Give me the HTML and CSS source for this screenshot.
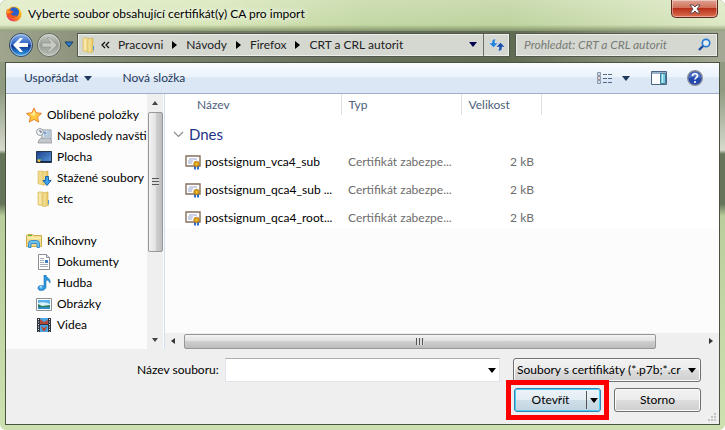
FILE: index.html
```html
<!DOCTYPE html>
<html lang="cs">
<head>
    <meta charset="UTF-8">
    <meta name="viewport" content="width=device-width, initial-scale=1.0">
    <title>Vyberte soubor</title>
    <link rel="stylesheet" href="styles.css">
</head>
<body>
    <!-- shared shapes -->
    <svg class="defs" width="0" height="0">
        <defs>
            <linearGradient id="gold" x1="0" x2="1" y1="0" y2="0">
                <stop offset="0" stop-color="#f8eaa8"/>
                <stop offset="1" stop-color="#e2be55"/>
            </linearGradient>
            <linearGradient id="fox" x1="1" x2="0" y1="0" y2="1">
                <stop offset="0" stop-color="#ffe226"/>
                <stop offset="0.5" stop-color="#ff8a16"/>
                <stop offset="1" stop-color="#e31587"/>
            </linearGradient>
            <linearGradient id="blue" x1="0" x2="0" y1="0" y2="1">
                <stop offset="0" stop-color="#8db5ea"/>
                <stop offset="0.48" stop-color="#2a5fbd"/>
                <stop offset="0.52" stop-color="#0d2f8c"/>
                <stop offset="1" stop-color="#35a9f0"/>
            </linearGradient>
            <linearGradient id="grey" x1="0" x2="0" y1="0" y2="1">
                <stop offset="0" stop-color="#c9cec8"/>
                <stop offset="0.5" stop-color="#989e94"/>
                <stop offset="1" stop-color="#bdc2ba"/>
            </linearGradient>
            <linearGradient id="sky" x1="0" x2="1" y1="0" y2="1">
                <stop offset="0" stop-color="#1b3f8c"/>
                <stop offset="1" stop-color="#5b9bdc"/>
            </linearGradient>
            <symbol id="folder" viewBox="0 0 16 16">
                <path d="M2 1h5l1 1v13l-5-1H2z" fill="#f0d98a" stroke="#d9ba57" stroke-width=".6"/>
                <path d="M7 2l5-1v12l1 1-5 2H7z" fill="url(#gold)" stroke="#d2ac43" stroke-width=".6"/>
                <path d="M4 2v11" stroke="#fff6cf"/>
                <path d="M12 9h1v4h-1z" fill="#4c9be0"/>
            </symbol>
            <symbol id="cert" viewBox="0 0 16 16">
                <path d="M1 2h14v10H1z" fill="#fff" stroke="#85705c" stroke-width="1.4"/>
                <path d="M4 5h8M3 7h5M3 9h4" stroke="#9aa3cf"/>
                <path d="M9 11h2v5l-1-1-1 1zM12 11h2v5l-1-1-1 1z" fill="#2d6fd0"/>
                <circle cx="11.500" cy="10" r="2.800" fill="#d99a12" stroke="#a9700a" stroke-width=".6"/>
                <circle cx="11.500" cy="10" r="1" fill="#f4cf5a"/>
            </symbol>
            <symbol id="down" viewBox="0 0 8 5">
                <path d="M0 0h8L4 5z" fill="currentColor"/>
            </symbol>
            <symbol id="right" viewBox="0 0 5 8">
                <path d="M0 0v8l5-4z" fill="currentColor"/>
            </symbol>
        </defs>
    </svg>

    <main class="window">
        <header class="titlebar">
            <svg class="logo" viewBox="0 0 16 16">
                <circle cx="8" cy="8" r="7.600" fill="url(#fox)"/>
                <path d="M5 2c3-2 7 0 8 3 0 3-1 6-4 6-3 1-6-1-6-4z" fill="#2760c8"/>
                <path d="M1 3l2 2c2-1 3 0 5 1-1 1-3 1-3 2 1 2 4 2 6 1-1 3-5 4-8 2C0 9 0 6 1 3z" fill="#f2541b"/>
                <path d="M1 3l2 2 3 1-3 1-2 1z" fill="#ff9a1f"/>
            </svg>
            <h1>Vyberte soubor obsahující certifikát(y) CA pro import</h1>
            <button class="close" aria-label="Zavřít">
                <svg width="12" height="10" viewBox="0 0 12 10"><path d="M1 1h3l2 2 2-2h3L8 5l3 4H8L6 7 4 9H1l3-4z" fill="#fff" stroke="#5a4a4e"/></svg>
            </button>
        </header>

        <div class="navbar">
            <div class="history">
                <button aria-label="Zpět">
                    <svg width="26" height="26" viewBox="0 0 26 26">
                        <circle cx="13" cy="13" r="11.500" fill="url(#blue)" stroke="#3a4a5c"/>
                        <circle cx="13" cy="13" r="10.500" fill="none" stroke="#c9dcf4" stroke-opacity=".7"/>
                        <path d="M5 13l7-7h3l-4 5h9v4h-9l4 5h-3z" fill="#fff"/>
                    </svg>
                </button>
                <button aria-label="Vpřed">
                    <svg width="26" height="26" viewBox="0 0 26 26">
                        <circle cx="13" cy="13" r="11.500" fill="url(#grey)" stroke="#5f675b"/>
                        <circle cx="13" cy="13" r="10.500" fill="none" stroke="#dde0da" stroke-opacity=".7"/>
                        <path d="M21 13l-7-7h-3l4 5H6v4h9l-4 5h3z" fill="#c6cac3" stroke="#8e958a" stroke-width=".6"/>
                    </svg>
                </button>
                <button class="recent" aria-label="Poslední stránky">
                    <svg width="10" height="7" viewBox="0 0 10 7"><path d="M1 1h8L5 6z" fill="#2f7dcd" stroke="#1b3c68"/></svg>
                </button>
            </div>
            <div class="address">
                <svg class="icon"><use href="#folder"/></svg>
                <svg class="more" width="9" height="8" viewBox="0 0 9 8"><path d="M4 1L1 4l3 3M8 1L5 4l3 3" fill="none" stroke="#111" stroke-width="1.300"/></svg>
                <a href="#">Pracovni</a>
                <svg class="sep"><use href="#right"/></svg>
                <a href="#">Návody</a>
                <svg class="sep"><use href="#right"/></svg>
                <a href="#">Firefox</a>
                <svg class="sep"><use href="#right"/></svg>
                <a href="#">CRT a CRL autorit</a>
                <button class="drop" aria-label="Předchozí umístění"><svg class="arrow"><use href="#down"/></svg></button>
                <button class="refresh" aria-label="Obnovit">
                    <svg width="16" height="14" viewBox="0 0 16 14">
                        <path d="M7 1C3 1 3 3 3 5H0l4.500 4.500L9 5H6c0-2 0-3 1-4z" fill="#2684d8" stroke="#eef6fc" stroke-width=".4"/>
                        <path d="M9 13c4 0 4-2 4-4h3l-4.500-4.500L7 9h3c0 2 0 3-1 4z" fill="#1c52a8" stroke="#eef6fc" stroke-width=".4"/>
                    </svg>
                </button>
            </div>
            <div class="search">
                <input type="search" placeholder="Prohledat: CRT a CRL autorit" aria-label="Prohledat">
                <svg width="13" height="13" viewBox="0 0 13 13">
                    <path d="M1 12l5-5" stroke="#1d4a9c" stroke-width="2.400"/>
                    <circle cx="8" cy="5" r="3.700" fill="#e3eef5" stroke="#2a7bd0" stroke-width="1.700"/>
                </svg>
            </div>
        </div>

        <section class="dialog">
            <div class="toolbar">
                <button class="organize">Uspořádat <svg class="arrow"><use href="#down"/></svg></button>
                <button>Nová složka</button>
                <div class="tools">
                    <button aria-label="Změnit zobrazení">
                        <svg width="16" height="13" viewBox="0 0 16 13">
                            <path d="M1.500.5h3v3h-3zM1.500 4.500h3v3h-3zM1.500 8.500h3v3h-3z" fill="#fff" stroke="#8c96a8"/>
                            <path d="M2.500 1.500h1v1h-1zM2.500 9.500h1v1h-1z" fill="#3d74c0"/>
                            <path d="M2.500 5.500h1v1h-1z" fill="#c33"/>
                            <path d="M7 2.500h4m1 0h4M7 6.500h4m1 0h4M7 10.500h4m1 0h4" stroke="#51698c"/>
                        </svg>
                    </button>
                    <button class="views" aria-label="Další možnosti"><svg class="arrow"><use href="#down"/></svg></button>
                    <button class="preview" aria-label="Podokno náhledu">
                        <svg width="16" height="14" viewBox="0 0 16 14">
                            <path d="M.5.5h15v13H.5z" fill="#fff" stroke="#4d6585"/>
                            <path d="M1 1h14v2H1z" fill="#9cb2cc"/>
                            <path d="M9.500 2.500h5v10h-5z" fill="#79cbe0" stroke="#3f7c9c"/>
                            <path d="M11.500 3v9" stroke="#c6f0f6"/>
                        </svg>
                    </button>
                    <button aria-label="Nápověda">
                        <svg width="16" height="16" viewBox="0 0 16 16">
                            <circle cx="8" cy="8" r="7.300" fill="#2449ac" stroke="#8a8f9c" stroke-width="1.400"/>
                            <path d="M2 8a6 6 0 0 1 12 0q-6-2-12 0z" fill="#6f92dc" opacity=".6"/>
                            <path d="M5.500 6c0-3 5-3 5 0 0 1.500-2.500 1.700-2.500 3.500" fill="none" stroke="#fff" stroke-width="1.700"/>
                            <circle cx="8" cy="12" r="1.100" fill="#fff"/>
                        </svg>
                    </button>
                </div>
            </div>

            <div class="content">
                <nav class="sidebar">
                    <ul>
                        <li class="root"><a href="#">
                            <svg class="icon" viewBox="0 0 16 16"><path d="M8 1l2.200 4.800 5.300.6-4 3.500 1.200 5.200L8 12.400l-4.700 2.700 1.200-5.200-4-3.500 5.300-.6z" fill="#ffc83d" stroke="#e8822a"/><path d="M8 3l1.500 4L8 9 4 7l2.500-.5z" fill="#ffec94"/></svg>
                            Oblíbené položky</a></li>
                        <li><a href="#">
                            <svg class="icon" viewBox="0 0 16 16"><path d="M6 2h9v9H6z" fill="#e8eef4" stroke="#8b949e"/><path d="M8 4h2v2H8zM11 4h3M11 6h3M8 8h6" fill="#5c9bd4" stroke="#7fa6c8"/><path d="M3 12l2-2h9l2 3v2H2z" fill="#c3c8cd" stroke="#868d94" stroke-width=".7"/><circle cx="4" cy="4" r="3.400" fill="#f4f7fa" stroke="#8c98a4"/><path d="M4 2v2h2" fill="none" stroke="#556"/></svg>
                            Naposledy navšti</a></li>
                        <li><a href="#">
                            <svg class="icon" viewBox="0 0 16 16"><path d="M.5 2.500h15v11H.5z" fill="url(#sky)" stroke="#27364f"/><path d="M1 12h14v1H1z" fill="#18233c"/><circle cx="3" cy="11.500" r="1.500" fill="#f0c53a"/><path d="M3 10h2v1H3z" fill="#46b35a"/></svg>
                            Plocha</a></li>
                        <li><a href="#">
                            <svg class="icon" viewBox="0 0 16 16"><path d="M2 1h5l1 1v13l-5-1H2z" fill="#f0d98a" stroke="#d9ba57" stroke-width=".6"/><path d="M7 2l5-1v12l-4 2H7z" fill="url(#gold)" stroke="#d2ac43" stroke-width=".6"/><path d="M9.500 6.500h3v4h2.500L11 15.500 7 10.500h2.500z" fill="#3ba2ea" stroke="#1663ae"/></svg>
                            Stažené soubory</a></li>
                        <li><a href="#"><svg class="icon"><use href="#folder"/></svg> etc</a></li>
                    </ul>
                    <ul>
                        <li class="root"><a href="#">
                            <svg class="icon" viewBox="0 0 16 16"><path d="M.5 2.500l1-1h5l1 1h8v11H.5z" fill="#f2dc8b" stroke="#cfac49"/><path d="M1 5h14" stroke="#fff6c8"/><path d="M2 2.500h4" stroke="#5cbf3c"/><path d="M2.500 14.500v-4q0-3 3-3h5q3 0 3 3v4H11v-4H5v4z" fill="#6fc0ea" stroke="#3a8cc4"/></svg>
                            Knihovny</a></li>
                        <li><a href="#">
                            <svg class="icon" viewBox="0 0 16 16"><path d="M2.500.5h8l3 3v12h-11z" fill="#fff" stroke="#8a8f96"/><path d="M10.500.5v3h3" fill="#dde" stroke="#8a8f96"/><path d="M4 4.500h4M4 6.500h4M4 8.500h4M4 10.500h8M4 12.500h8" stroke="#a6afbb"/><path d="M9 6h3v3H9z" fill="#3a7fc4"/></svg>
                            Dokumenty</a></li>
                        <li><a href="#">
                            <svg class="icon" viewBox="0 0 16 16"><path d="M8 0h2c0 3 5 3 4 8-1-2-2-3-4-3v7c0 4-8 5-8 1 0-3 4-3 6-2z" fill="#2c98de" stroke="#1b70b4" stroke-width=".6"/><circle cx="5" cy="12" r="1.500" fill="#8fd0f6"/></svg>
                            Hudba</a></li>
                        <li><a href="#">
                            <svg class="icon" viewBox="0 0 16 16"><path d="M.5 2.500h15v12H.5z" fill="#fff" stroke="#8a9096"/><path d="M2 4h12v9H2z" fill="#59b0e8"/><path d="M2 7q6-2 12 1v2H2z" fill="#d8f0fa"/><path d="M2 8l4 2 8-1v2H2z" fill="#2d7a5c"/><path d="M2 11h12v2H2z" fill="#2f8fc4"/></svg>
                            Obrázky</a></li>
                        <li><a href="#">
                            <svg class="icon" viewBox="0 0 16 16"><path d="M1 1h14v14H1z" fill="#30363e"/><path d="M4 1h8v6H4zM4 8h8v7H4z" fill="#4ba3e2"/><path d="M4 2l4 3 4-2v4H4zM5 9l3 2 3-2-2 5H7z" fill="#b4493a"/><path d="M2.500 2v13M13.500 2v13" stroke="#e8ecf0" stroke-dasharray="1 1.500"/></svg>
                            Videa</a></li>
                    </ul>
                </nav>
                <div class="vscroll">
                    <svg class="up" width="6" height="4" viewBox="0 0 6 4"><path d="M0 4h6L3 0z" fill="#444"/></svg>
                    <div class="vthumb"><i></i></div>
                    <svg class="dn" width="6" height="4" viewBox="0 0 6 4"><path d="M0 0h6L3 4z" fill="#444"/></svg>
                </div>

                <div class="files">
                    <table>
                        <colgroup><col class="name"><col class="type"><col class="size"></colgroup>
                        <thead>
                            <tr><th>Název</th><th>Typ</th><th>Velikost</th></tr>
                        </thead>
                        <tbody>
                            <tr class="group">
                                <td colspan="3"><svg width="11" height="7" viewBox="0 0 11 7"><path d="M1 1l4.500 4.500L10 1" fill="none" stroke="#8c8c8c" stroke-width="1.200"/></svg>Dnes</td>
                            </tr>
                            <tr><td><svg class="icon"><use href="#cert"/></svg>postsignum_vca4_sub</td><td>Certifikát zabezpe...</td><td>2 kB</td></tr>
                            <tr><td><svg class="icon"><use href="#cert"/></svg>postsignum_qca4_sub ...</td><td>Certifikát zabezpe...</td><td>2 kB</td></tr>
                            <tr><td><svg class="icon"><use href="#cert"/></svg>postsignum_qca4_root...</td><td>Certifikát zabezpe...</td><td>2 kB</td></tr>
                        </tbody>
                    </table>
                    <div class="hscroll">
                        <svg width="4" height="6" viewBox="0 0 4 6"><path d="M4 0v6L0 3z" fill="#333"/></svg>
                        <div class="hthumb"><i></i></div>
                        <svg width="4" height="6" viewBox="0 0 4 6"><path d="M0 0v6l4-3z" fill="#333"/></svg>
                    </div>
                </div>
            </div>

            <form class="bottom">
                <div class="line">
                    <label for="filename">Název souboru:</label>
                    <div class="combo">
                        <input id="filename" type="text">
                        <svg class="arrow"><use href="#down"/></svg>
                    </div>
                    <div class="filter">
                        <select aria-label="Typ souboru">
                            <option>Soubory s certifikáty (*.p7b;*.cr</option>
                        </select>
                        <svg class="arrow"><use href="#down"/></svg>
                    </div>
                </div>
                <div class="line actions">
                    <div class="open">
                        <button type="button">Otevřít</button>
                        <button type="button" class="split" aria-label="Možnosti otevření"><svg class="arrow"><use href="#down"/></svg></button>
                    </div>
                    <button type="button" class="cancel">Storno</button>
                </div>
                <svg class="grip" width="9" height="9" viewBox="0 0 9 9"><path d="M6 0h2v2H6zM3 3h2v2H3zM6 3h2v2H6zM0 6h2v2H0zM3 6h2v2H3zM6 6h2v2H6z" fill="#c3c3c3"/></svg>
            </form>
        </section>
    </main>
</body>
</html>
```
FILE: styles.css
```css
* {
    box-sizing: border-box;
}
body {
    margin: 0;
    font-family: Lato, "Open Sans", "Noto Sans", sans-serif;
    font-size: 12px;
    line-height: 16px;
    color: #000;
}
button, input, select {
    font: inherit;
    color: inherit;
    margin: 0;
    padding: 0;
    border: none;
    background: none;
}
a {
    color: inherit;
    text-decoration: none;
}
ul {
    list-style: none;
    margin: 0;
    padding: 0;
}
.defs {
    position: absolute;
}
.icon {
    width: 16px;
    height: 16px;
    flex: none;
}
.arrow {
    width: 8px;
    height: 5px;
    flex: none;
}
.window {
    min-height: 100vh;
    display: flex;
    flex-direction: column;
    padding: 0 5px 5px;
    border-radius: 6px;
    background: linear-gradient(#8f9a80 0, #8f9a80 90px, #d5dacd 150px, #66755a 154px, #66755a 204px, #b8cc9c 216px, #cde0b0 100%);
}

/* title */
.titlebar {
    height: 31px;
    margin: 0 -5px;
    padding: 0 7px 4px 6px;
    display: flex;
    align-items: center;
    gap: 6px;
    border-radius: 6px 6px 0 0;
    background: linear-gradient(rgba(255, 255, 255, 0.2), rgba(255, 255, 255, 0) 80%, rgba(90, 105, 70, 0.6)), linear-gradient(to right, #e0ecc6, #d6e6b6 30%, #c3d7a3 50%, #bed39e 70%, #dce9c4);
}
.logo {
    width: 16px;
    height: 16px;
}
.titlebar h1 {
    margin: 0;
    flex: 1;
    font-size: 12px;
    font-weight: normal;
    white-space: nowrap;
    text-shadow: 0 0 6px #fff, 0 0 10px #fff;
}
.close {
    align-self: flex-start;
    width: 47px;
    height: 18px;
    display: flex;
    align-items: center;
    justify-content: center;
    border: 1px solid #5e2a20;
    border-top: none;
    border-radius: 0 0 5px 5px;
    background: linear-gradient(#e0a393, #d0705a 45%, #b8301a 50%, #dc7050);
    box-shadow: inset 0 0 0 1px rgba(255, 255, 255, 0.4);
}

/* back, address, search */
.navbar {
    height: 31px;
    margin: 0 -5px;
    padding: 0 7px 4px 8px;
    display: flex;
    align-items: center;
    background: linear-gradient(to right, #a0a58d, #7c846e 20%, #66705a 50%, #5f6b50 70%, #a3a994);
}
.history {
    width: 69px;
    display: flex;
    align-items: center;
    gap: 2px;
}
.history button {
    display: flex;
}
.address, .search {
    height: 24px;
    display: flex;
    align-items: center;
    border: 1px solid #52584c;
    background: #d5d7d1;
    box-shadow: inset 0 0 0 1px #eceeea;
    color: #222;
}
.address {
    flex: 1;
    padding-left: 3px;
    white-space: nowrap;
}
.address .more {
    margin: 0 8px 0 4px;
}
.address .sep {
    width: 5px;
    height: 8px;
    margin: 0 9px;
    color: #000;
}
.drop {
    margin-left: auto;
    width: 20px;
    color: #000050;
}
.drop, .refresh {
    height: 22px;
    display: flex;
    align-items: center;
    justify-content: center;
}
.refresh {
    width: 26px;
    border-left: 1px solid #6d7268;
}
.search {
    width: 203px;
    margin-left: 5px;
    padding: 0 6px 0 8px;
}
.search input {
    flex: 1;
    min-width: 0;
    outline: none;
}
.search input::placeholder {
    color: #777b75;
    font-style: italic;
    opacity: 1;
}

/* client area */
.dialog {
    flex: 1;
    display: flex;
    flex-direction: column;
    border: 1px solid #4a5340;
    background: #efefef;
}
.toolbar {
    height: 31px;
    display: flex;
    align-items: center;
    padding: 0 16px 0 18px;
    gap: 30px;
    color: #1e395b;
    background: linear-gradient(#fafcff, #eaf2fb 45%, #dce7f5 50%, #dce7f5);
    border-bottom: 1px solid #a0afc8;
}
.organize {
    display: flex;
    align-items: center;
    gap: 6px;
}
.tools {
    margin-left: auto;
    display: flex;
    align-items: center;
}
.tools button {
    display: flex;
}
.tools .views {
    margin-left: 10px;
}
.tools .preview {
    margin: 0 20px 0 21px;
}
.content {
    flex: 1;
    display: flex;
    background: #fcfcfc;
}
.sidebar {
    width: 141px;
    padding: 10px 0 4px;
    overflow: hidden;
    white-space: nowrap;
}
.sidebar ul + ul {
    margin-top: 21px;
}
.sidebar a {
    height: 21px;
    display: flex;
    align-items: center;
    gap: 5px;
    padding-left: 30px;
}
.sidebar .root a {
    padding-left: 20px;
}
.vscroll {
    width: 16px;
    display: flex;
    flex-direction: column;
    align-items: center;
    background: #efefef;
}
.up {
    margin: 7px 0;
}
.dn {
    margin: auto 0 7px;
}
.vthumb {
    width: 15px;
    flex: 0 0 55%;
    display: flex;
    align-items: center;
    justify-content: center;
    border: 1px solid #979797;
    border-radius: 2px;
    background: linear-gradient(to right, #f3f3f3, #e2e2e2 50%, #cfcfd1 55%, #bdbdc0);
}
.vthumb i {
    width: 7px;
    height: 8px;
    background: repeating-linear-gradient(#555 0, #555 1px, #ddd 1px, #ddd 3px);
}

/* file list */
.files {
    flex: 1;
    min-width: 0;
    display: flex;
    flex-direction: column;
    margin-left: 1px;
    border-left: 1px solid #cfe0f3;
    background: linear-gradient(#fff 134px, #fcfcfc 134px);
}
.files table {
    width: 376px;
    table-layout: fixed;
    border-collapse: collapse;
}
.name {
    width: 176px;
}
.type {
    width: 120px;
}
.size {
    width: 80px;
}
.files th, .files td {
    padding: 0 0 0 7px;
    white-space: nowrap;
    color: #6d6d6d;
}
.files th {
    height: 21px;
    text-align: left;
    font-weight: normal;
    color: #4c607a;
    border-right: 1px solid #e0e0e0;
}
.files th:first-child {
    padding-left: 32px;
}
.files td {
    height: 28px;
}
.files td:first-child {
    padding-left: 20px;
    color: #000;
}
.files td:last-child {
    padding-right: 7px;
    text-align: right;
}
.files td .icon {
    margin-right: 4px;
    vertical-align: middle;
}
.files .group td {
    height: 33px;
    padding: 5px 0 0 8px;
    font-size: 15px;
    line-height: 20px;
    text-align: left;
    color: #1e3287;
}
.group svg {
    margin-right: 5px;
    vertical-align: 2px;
}
.hscroll {
    height: 16px;
    margin-top: auto;
    padding: 0 6px;
    display: flex;
    align-items: center;
    background: #efefef;
}
.hthumb {
    width: 87%;
    height: 15px;
    margin: 0 auto 0 9px;
    display: flex;
    align-items: center;
    justify-content: center;
    border: 1px solid #979797;
    border-radius: 2px;
    background: linear-gradient(#f3f3f3, #e2e2e2 45%, #cfcfd1 50%, #bdbdc0);
}
.hthumb i {
    width: 8px;
    height: 7px;
    background: repeating-linear-gradient(to right, #555 0, #555 1px, #ddd 1px, #ddd 3px);
}

/* file name and buttons */
.bottom {
    position: relative;
    padding: 9px 18px 12px 131px;
}
.line {
    display: flex;
    align-items: center;
}
.line label {
    margin-right: 6px;
    white-space: nowrap;
}
.combo {
    flex: 1;
    height: 24px;
    display: flex;
    align-items: center;
    padding-right: 3px;
    background: #fff;
    border: 1px solid #e2e3ea;
    border-top-color: #abadb3;
}
.combo input {
    flex: 1;
    min-width: 0;
    padding: 0 4px;
    outline: none;
}
.filter {
    position: relative;
    width: 188px;
    margin-left: 13px;
}
.filter select {
    appearance: none;
    display: block;
    width: 100%;
    height: 24px;
    padding: 0 16px 0 3px;
}
.filter .arrow {
    position: absolute;
    right: 5px;
    top: 10px;
    pointer-events: none;
}
.filter select, .cancel {
    border: 1px solid #707070;
    border-radius: 3px;
    background: linear-gradient(#f2f2f2, #ebebeb 50%, #dddddd 50%, #cfcfcf);
    box-shadow: inset 0 0 0 1px #fbfbfb;
}
.actions {
    justify-content: flex-end;
    gap: 13px;
    margin-top: 6px;
}
.cancel {
    width: 87px;
    height: 24px;
}
.open {
    position: relative;
    width: 87px;
    height: 24px;
    display: flex;
    border: 1px solid #3c7fb1;
    border-radius: 3px;
    background: linear-gradient(#eef4f8, #e2edf4 50%, #cfdfe9 50%, #c3d5e1);
    box-shadow: inset 0 0 0 1px #48d1f7;
}
/* red highlight round the open button */
.open::after {
    content: "";
    position: absolute;
    inset: -9px;
    border: 5px solid #f00;
    pointer-events: none;
}
.open button:first-child {
    flex: 1;
}
.open .split {
    width: 14px;
    margin: 2px 0;
    display: flex;
    align-items: center;
    justify-content: center;
    border-left: 1px solid #555;
}
.grip {
    position: absolute;
    right: 2px;
    bottom: 2px;
}
```
